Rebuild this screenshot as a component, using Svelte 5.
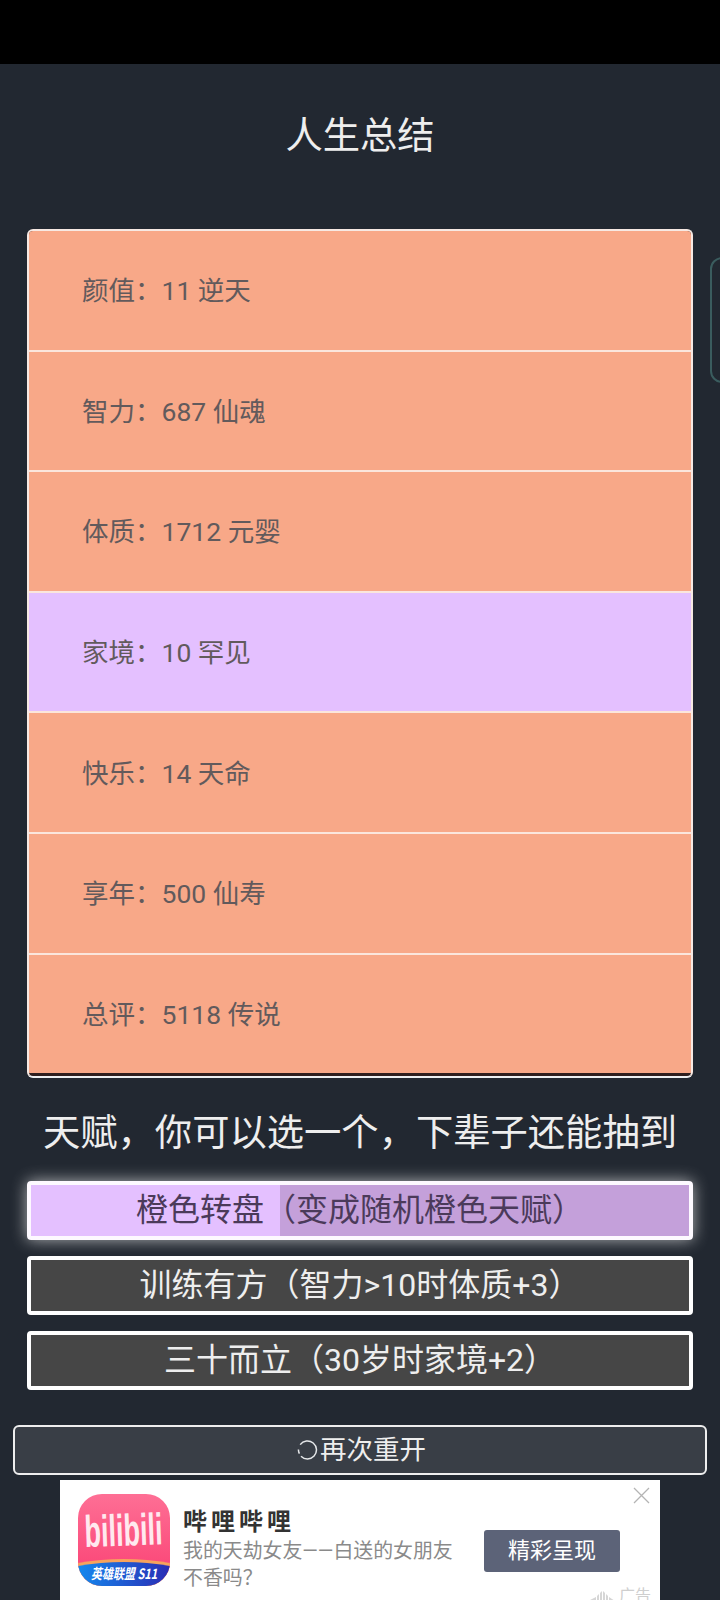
<script>
  const rows = [
    { label: '颜值：11 逆天', grade: 'orange' },
    { label: '智力：687 仙魂', grade: 'orange' },
    { label: '体质：1712 元婴', grade: 'orange' },
    { label: '家境：10 罕见', grade: 'purple' },
    { label: '快乐：14 天命', grade: 'orange' },
    { label: '享年：500 仙寿', grade: 'orange' },
    { label: '总评：5118 传说', grade: 'orange' }
  ];
  const talents = [
    { text: '橙色转盘（变成随机橙色天赋）', selected: true },
    { text: '训练有方（智力>10时体质+3）', selected: false },
    { text: '三十而立（30岁时家境+2）', selected: false }
  ];
</script>

<div class="page">
  <div class="statusbar"></div>
  <h1 class="title">人生总结</h1>

  <ul class="summary">
    {#each rows as row}
      <li class={row.grade}>{row.label}</li>
    {/each}
  </ul>

  <h2 class="subtitle">天赋，你可以选一个，下辈子还能抽到</h2>

  <ul class="talents">
    {#each talents as t}
      <li class:selected={t.selected}>{t.text}</li>
    {/each}
  </ul>

  <button class="restart">
    <svg class="spin" width="21" height="20" viewBox="0 0 21 20" fill="none">
      <path d="M3.2 4.6A9 9 0 1 1 4 16.2" stroke="#e6e8ea" stroke-width="1.5" />
      <path d="M1.4 9.6a9 9 0 0 0 1 4" stroke="#e6e8ea" stroke-width="1.5" />
    </svg>再次重开
  </button>

  <div class="ad">
    <svg class="logo" width="92" height="92" viewBox="0 0 92 92">
      <defs>
        <linearGradient id="pink" x1="0" y1="0" x2="0" y2="1">
          <stop offset="0" stop-color="#fe6f95" />
          <stop offset="1" stop-color="#fa3f72" />
        </linearGradient>
        <linearGradient id="blue" x1="0" y1="0" x2="1" y2="0">
          <stop offset="0" stop-color="#1488ee" />
          <stop offset="1" stop-color="#2b2cb4" />
        </linearGradient>
        <clipPath id="squircle"><rect width="92" height="92" rx="24" /></clipPath>
      </defs>
      <g clip-path="url(#squircle)">
        <rect width="92" height="92" fill="url(#pink)" />
        <path d="M0 69Q46 61 92 69V92H0Z" fill="#f7a35c" />
        <path d="M0 72Q46 64 92 72V92H0Z" fill="url(#blue)" />
      </g>
      <text class="bili" transform="translate(7 53) rotate(-2) scale(1 1.65)">bilibili</text>
      <text class="league" transform="translate(13 85) scale(1 1.3)">英雄联盟 S11</text>
    </svg>
    <div class="ad-text">
      <div class="ad-name">哔哩哔哩</div>
      <div class="ad-desc">我的天劫女友——白送的女朋友不香吗？</div>
    </div>
    <div class="ad-cta">精彩呈现</div>
    <svg class="close" width="17" height="17" viewBox="0 0 17 17" fill="none">
      <path d="M1 1L16 16M16 1L1 16" stroke="#b4b4b4" stroke-width="1.3" />
    </svg>
    <div class="ad-mark">
      <svg width="27" height="11" viewBox="0 0 27 11">
        <path d="M0 10L8 6V10ZM9 5L11 3V10H9ZM12 2L14 0V10H12ZM15 0L17 2V10H15ZM18 3L20 5V10H18ZM21 6L27 10H21Z" fill="#d6d6d6" />
      </svg>
      <span>广告</span>
    </div>
  </div>

  <div class="side-tab"></div>
</div>

<style>
  :global(body) {
    margin: 0;
    background: #222831;
  }
  .page {
    position: relative;
    width: 720px;
    height: 1600px;
    overflow: hidden;
    background: #222831;
    font-family: Roboto, "Noto Sans CJK SC", sans-serif;
    color: #eeeeee;
  }
  .statusbar {
    height: 64px;
    background: #000;
  }
  .title {
    margin: 0;
    padding: 47px 0 68px;
    font-size: 37.3px;
    font-weight: 400;
    line-height: 50px;
    text-align: center;
  }
  ul {
    list-style: none;
    margin: 0;
    padding: 0;
  }
  .summary {
    box-sizing: border-box;
    height: 849px;
    margin: 0 27px;
    border: 2px solid #f7e9e3;
    border-bottom-color: #eef0f2;
    border-radius: 6px;
    background: #2f1f1f;
    overflow: hidden;
  }
  .summary li {
    box-sizing: border-box;
    height: 120.6px;
    padding: 0 0 3px 53px;
    border-bottom: 2px solid #fbe6dc;
    display: flex;
    align-items: center;
    font-size: 26.5px;
    color: #625a5c;
  }
  .summary li:last-child {
    height: 118.5px;
    border-bottom: 0;
  }
  .orange {
    background: #f8a888;
  }
  .purple {
    background: #e4c0ff;
  }
  .subtitle {
    margin: 0;
    padding-top: 30px;
    height: 73px;
    box-sizing: border-box;
    font-size: 37.3px;
    font-weight: 400;
    line-height: 50px;
    text-align: center;
    white-space: nowrap;
  }
  .talents {
    display: flex;
    flex-direction: column;
    gap: 16px;
    margin: 30px 27px 0 27px;
  }
  .talents li {
    box-sizing: border-box;
    height: 59px;
    border: 4px solid #ffffff;
    border-radius: 4px;
    background: #464646;
    font-size: 32px;
    line-height: 51px;
    text-align: center;
    white-space: nowrap;
    color: #eeeeee;
  }
  .talents li.selected {
    border-color: #fdf9ff;
    background: linear-gradient(90deg, #e4c0ff 0 249px, #c4a0da 249px);
    color: #4b3a5a;
    box-shadow: 0 0 16px rgba(238, 238, 238, 0.7);
  }
  .restart {
    display: flex;
    align-items: center;
    justify-content: center;
    box-sizing: border-box;
    width: 694px;
    height: 50px;
    margin: 35px 0 5px 13px;
    padding: 0 0 0 3px;
    border: 2px solid #eeeeee;
    border-radius: 6px;
    background: #393e46;
    color: #eeeeee;
    font-family: inherit;
    font-size: 26.5px;
    line-height: 1;
  }
  .spin {
    flex: none;
    margin-right: 2px;
  }
  .ad {
    position: relative;
    box-sizing: border-box;
    width: 600px;
    height: 120px;
    margin-left: 60px;
    padding: 14px 0 0 18px;
    display: flex;
    align-items: flex-start;
    overflow: hidden;
    background: #fff;
  }
  .logo {
    flex: none;
  }
  .bili {
    font-family: "Liberation Sans", sans-serif;
    font-weight: 700;
    font-size: 27px;
    fill: #ffe9ef;
  }
  .league {
    font-family: "Noto Sans CJK SC", sans-serif;
    font-style: italic;
    font-weight: 700;
    font-size: 11px;
    fill: #fff;
  }
  .ad-text {
    width: 282px;
    margin-left: 13px;
    padding-top: 13px;
  }
  .ad-name {
    font-size: 24px;
    font-weight: 700;
    letter-spacing: 4px;
    line-height: 30px;
    color: #333;
  }
  .ad-desc {
    margin-top: 1px;
    font-size: 19.9px;
    line-height: 27px;
    color: #8a8a8a;
  }
  .ad-cta {
    flex: none;
    width: 136px;
    height: 42px;
    margin: 36px 0 0 19px;
    border-radius: 3px;
    background: #5c6378;
    color: #fff;
    font-size: 22px;
    line-height: 42px;
    text-align: center;
  }
  .close {
    position: absolute;
    top: 7px;
    right: 10px;
  }
  .ad-mark {
    position: absolute;
    top: 105px;
    right: 9px;
    display: flex;
    align-items: center;
    gap: 4px;
    font-size: 16px;
    line-height: 22px;
    color: #cfcfcf;
  }
  .side-tab {
    position: absolute;
    top: 257px;
    left: 710px;
    width: 40px;
    height: 126px;
    box-sizing: border-box;
    border: 2px solid #3a5c5e;
    border-radius: 12px;
  }
</style>
